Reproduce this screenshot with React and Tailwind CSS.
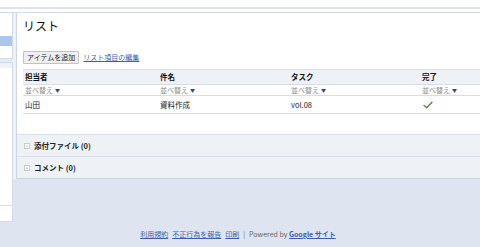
const font = { fontFamily: '"Noto Sans CJK JP", "Liberation Sans", sans-serif' };

function SortCell() {
  return (
    <span className="flex items-center gap-[2px] text-[7px] text-[#8a8a8a]">
      並べ替え
      <span className="text-[5px] text-[#2a4a8a]">▼</span>
    </span>
  );
}

function Check() {
  return (
    <svg viewBox="0 0 12 10" className="h-[8px] w-[10px]" fill="none" stroke="#3d8c2e" strokeWidth="1.6" strokeLinecap="round" strokeLinejoin="round">
      <path d="M1 5.5 L4.2 8.5 L11 1.5" />
    </svg>
  );
}

function Section({ title }) {
  return (
    <div className="flex h-[22px] items-center gap-[4px] border-t border-[#d9dfe9] bg-[#eef2f7] pl-[7px]">
      <span className="flex h-[6px] w-[6px] items-center justify-center border border-[#c4cad4] bg-white text-[5px] leading-none text-[#999]">+</span>
      <span className="text-[7.5px] font-bold text-[#222]">{title}</span>
    </div>
  );
}

export default function App() {
  const cols = ['w-[135px]', 'w-[131px]', 'w-[131px]', 'flex-1'];
  return (
    <div className="h-[247px] w-[480px] overflow-hidden bg-[#dfe5f0]" style={font}>
      <div className="h-[12px] bg-white pt-[7px]">
        <div className="h-[2px] bg-[#dde3ec]" />
      </div>
      <div className="flex items-start border-t border-[#d3dbe7]">
        <div className="flex w-[13px] flex-col">
          <div className="h-[45px] border-r border-[#d3dbe7] bg-white pt-[23px]">
            <div className="h-[10px] bg-[#a9c6ec]" />
          </div>
          <div className="h-[4px] border-t border-[#d3dbe7] bg-[#e6ebf3]" />
          <div className="flex h-[160px] flex-col border-y border-r border-[#d3dbe7] bg-white">
            <div className="h-[5px] bg-[#eef1f6]" />
            <div className="h-[137px]" />
            <div className="flex-1 border-t border-[#d9dfe9]" />
          </div>
        </div>
        <div className="h-[166px] w-[3px] bg-[#eef1f6]" />
        <div className="flex h-[166px] flex-1 flex-col border-b border-l border-[#cfd6e2] bg-white">
          <div className="pl-[6px] pt-[5px] text-[12px] leading-[16px] text-[#111]">リスト</div>
          <div className="mt-[17px] flex items-center gap-[4px] pl-[6px]">
            <button className="h-[13px] rounded-[1px] border border-[#c2c2c2] bg-[#efefef] px-[3px] text-[7px] leading-none text-[#222]">アイテムを追加</button>
            <a className="text-[7px] text-[#3c5fb5] underline">リスト項目の編集</a>
          </div>
          <div className="ml-[6px] mt-[5px] text-[7.5px]">
            <div className="flex h-[16px] items-center border-y border-[#d6dde8] bg-[#eef2f7] font-bold text-[#111]">
              {['担当者', '件名', 'タスク', '完了'].map((t, i) => (
                <div key={t} className={`${cols[i]} pl-[2px]`}>{t}</div>
              ))}
            </div>
            <div className="flex h-[11px] items-center border-b border-[#d6dde8]">
              {cols.map((c) => (
                <div key={c} className={`${c} pl-[2px]`}><SortCell /></div>
              ))}
            </div>
            <div className="flex h-[18px] items-center border-b border-[#d6dde8] text-[#222]">
              <div className={`${cols[0]} pl-[2px]`}>山田</div>
              <div className={`${cols[1]} pl-[2px]`}>資料作成</div>
              <div className={`${cols[2]} pl-[2px]`}>vol.08</div>
              <div className={`${cols[3]} pl-[3px]`}><Check /></div>
            </div>
          </div>
          <div className="flex-1" />
          <Section title="添付ファイル (0)" />
          <Section title="コメント (0)" />
        </div>
      </div>
      <div className="mt-[7px] flex items-center justify-center gap-[4px] pr-[4px] text-[7px] text-[#666]">
        <a className="text-[#3c5fb5] underline">利用規約</a>
        <a className="text-[#3c5fb5] underline">不正行為を報告</a>
        <a className="text-[#3c5fb5] underline">印刷</a>
        <span>|</span>
        <span>
          Powered by <a className="font-bold text-[#3c5fb5] underline">Google サイト</a>
        </span>
      </div>
    </div>
  );
}
